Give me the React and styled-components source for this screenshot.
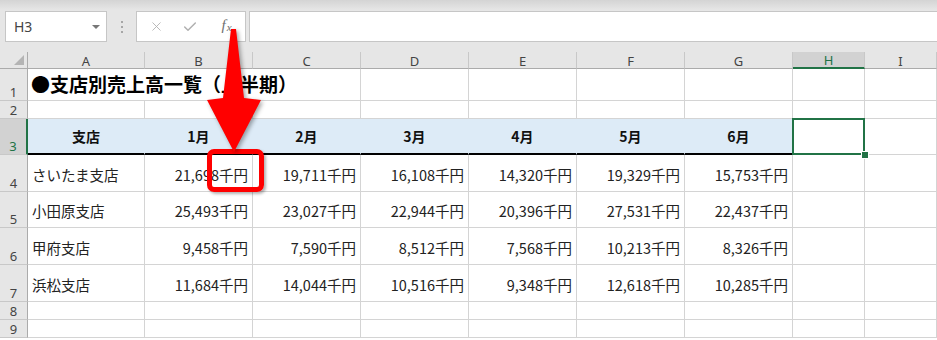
import styled, { createGlobalStyle, css } from "styled-components";
import { X, Check } from "lucide-react";

const GlobalStyle = createGlobalStyle`
    body {
        margin: 0;
        background: #fff;
        font-family: "Noto Sans CJK JP", "Noto Sans", sans-serif;
    }
`;

const GREEN = "#217346";

const Screen = styled.div`
    width: 937px;
    height: 340px;
    overflow: hidden;
    position: relative;
    background: #fff;
`;

const Toolbar = styled.div`
    display: flex;
    align-items: center;
    padding: 11px 0 10px 5px;
    background: linear-gradient(to bottom, #d4d4d4 0px, #e6e6e6 10px, #e6e6e6 100%);
`;

const Box = styled.div`
    height: 31px;
    box-sizing: border-box;
    border: 1px solid #c6c6c6;
    background: #fff;
`;

const NameBox = styled(Box)`
    width: 102px;
    display: flex;
    align-items: center;
    justify-content: space-between;
    padding: 0 6px 0 8px;
    font-family: "Noto Sans", sans-serif;
    font-size: 14px;
    color: #444;
`;

const DropArrow = styled.span`
    width: 0;
    height: 0;
    border-left: 4px solid transparent;
    border-right: 4px solid transparent;
    border-top: 4px solid #777;
`;

const Dots = styled.div`
    display: flex;
    flex-direction: column;
    gap: 3px;
    margin: 0 13px 0 14px;
    span {
        width: 2px;
        height: 2px;
        background: #a6a6a6;
    }
`;

const FxButtons = styled(Box)`
    width: 110px;
    display: grid;
    grid-template-columns: 30px 38px 38px;
    padding-left: 4px;
    align-items: center;
    justify-items: center;
`;

const FxLabel = styled.span`
    display: inline-flex;
    align-items: baseline;
    margin: -3px 3px 0 0;
    font-family: "Liberation Serif", serif;
    font-style: italic;
    font-size: 15px;
    line-height: 1;
    color: #6e6e6e;
    span {
        font-size: 11px;
        margin-left: 1px;
        transform: translateY(1px);
    }
`;

const FormulaInput = styled(Box)`
    flex: 1;
    margin-left: 3px;
    border-right: none;
`;

const Grid = styled.div`
    display: grid;
    grid-template-columns: 28px 117px repeat(6, 108px) 72px 1fr;
    grid-template-rows: 17px 32px 18px 36px 37px 36px 37px 37px 18px 18px;
`;

const ColHead = styled.div`
    box-sizing: border-box;
    background: ${p => (p.$active ? "#d2d2d2" : "#e6e6e6")};
    border-right: 1px solid #c8c8c8;
    border-bottom: ${p => (p.$active ? `2px solid ${GREEN}` : "1px solid #ababab")};
    display: flex;
    align-items: center;
    justify-content: center;
    font-family: "Noto Sans", sans-serif;
    font-size: 13px;
    color: ${p => (p.$active ? GREEN : "#444")};
    padding-top: 1px;
`;

const Corner = styled(ColHead)`
    position: relative;
    border-right: 1px solid #ababab;
    &::after {
        content: "";
        position: absolute;
        right: 3px;
        bottom: 3px;
        width: 0;
        height: 0;
        border-left: 10px solid transparent;
        border-bottom: 10px solid #b4b4b4;
    }
`;

const RowHead = styled.div`
    box-sizing: border-box;
    background: ${p => (p.$active ? "#d2d2d2" : "#e6e6e6")};
    border-right: ${p => (p.$active ? `2px solid ${GREEN}` : "1px solid #ababab")};
    border-bottom: 1px solid #c8c8c8;
    display: flex;
    align-items: flex-end;
    justify-content: center;
    font-family: "Noto Sans", sans-serif;
    font-size: 13px;
    line-height: 15px;
    color: ${p => (p.$active ? GREEN : "#444")};
`;

const Cell = styled.div`
    box-sizing: border-box;
    border-right: 1px solid #d4d4d4;
    border-bottom: 1px solid #d4d4d4;
    display: flex;
    align-items: center;
    justify-content: ${p => (p.$align === "right" ? "flex-end" : p.$align === "center" ? "center" : "flex-start")};
    padding: 2px 4px 0 4px;
    font-size: 14.5px;
    color: #222;
    white-space: nowrap;
    ${p =>
        p.$head &&
        css`
            background: #ddebf7;
            border-right-color: #ddebf7;
            border-bottom: 2px solid #000;
            font-weight: bold;
            font-size: 14px;
            color: #111;
            padding-top: 0;
        `}
`;

const TitleCell = styled(Cell)`
    grid-column: span 3;
    align-items: flex-end;
    padding: 0 4px 3px 3px;
    font-size: 19px;
    font-weight: bold;
    color: #000;
`;

const SelectedCell = styled(Cell)`
    position: relative;
    z-index: 1;
    &::before {
        content: "";
        position: absolute;
        inset: -1px -1px -1px -1px;
        border: 2px solid ${GREEN};
    }
    &::after {
        content: "";
        position: absolute;
        right: -5px;
        bottom: -5px;
        width: 6px;
        height: 6px;
        background: ${GREEN};
        border: 1px solid #fff;
    }
`;

const Arrow = styled.svg`
    position: absolute;
    left: 0;
    top: 0;
    width: 937px;
    height: 340px;
    pointer-events: none;
    filter: drop-shadow(2px 2px 2px rgba(0, 0, 0, 0.35));
    z-index: 3;
`;

const Callout = styled.div`
    position: absolute;
    left: 207px;
    top: 149px;
    width: 57px;
    height: 43px;
    box-sizing: border-box;
    border: 5px solid #ff0000;
    border-radius: 7px;
    box-shadow: 2px 2px 3px rgba(0, 0, 0, 0.3);
    z-index: 2;
`;

const columns = ["A", "B", "C", "D", "E", "F", "G", "H", "I"];
const months = ["1月", "2月", "3月", "4月", "5月", "6月"];

const branches = [
    ["さいたま支店", ["21,698", "19,711", "16,108", "14,320", "19,329", "15,753"]],
    ["小田原支店", ["25,493", "23,027", "22,944", "20,396", "27,531", "22,437"]],
    ["甲府支店", ["9,458", "7,590", "8,512", "7,568", "10,213", "8,326"]],
    ["浜松支店", ["11,684", "14,044", "10,516", "9,348", "12,618", "10,285"]],
];

const emptyRow = n => [
    <RowHead key={`r${n}`}>{n}</RowHead>,
    ...columns.map(c => <Cell key={`${c}${n}`} />),
];

const App = () => {
    return (
        <Screen>
            <GlobalStyle />
            <Toolbar>
                <NameBox>
                    <span>H3</span>
                    <DropArrow />
                </NameBox>
                <Dots>
                    <span />
                    <span />
                    <span />
                </Dots>
                <FxButtons>
                    <X size={15} strokeWidth={1.4} color="#b0b0b0" />
                    <Check size={16} strokeWidth={2.2} color="#b0b0b0" />
                    <FxLabel>
                        f<span>x</span>
                    </FxLabel>
                </FxButtons>
                <FormulaInput />
            </Toolbar>

            <Grid>
                <Corner />
                {columns.map(c => (
                    <ColHead key={c} $active={c === "H"}>
                        {c}
                    </ColHead>
                ))}

                <RowHead>1</RowHead>
                <TitleCell>●支店別売上高一覧（上半期）</TitleCell>
                {columns.slice(3).map(c => <Cell key={`${c}1`} />)}

                {emptyRow(2)}

                <RowHead $active>3</RowHead>
                <Cell $head $align="center">支店</Cell>
                {months.map(m => (
                    <Cell key={m} $head $align="center">
                        {m}
                    </Cell>
                ))}
                <SelectedCell />
                <Cell />

                {branches.map(([name, values], i) => [
                    <RowHead key={`rh${i}`}>{i + 4}</RowHead>,
                    <Cell key={`n${i}`}>{name}</Cell>,
                    ...values.map((v, j) => (
                        <Cell key={`v${i}-${j}`} $align="right">
                            {v}千円
                        </Cell>
                    )),
                    <Cell key={`h${i}`} />,
                    <Cell key={`i${i}`} />,
                ])}

                {emptyRow(8)}
                {emptyRow(9)}
            </Grid>

            <Callout />
            <Arrow viewBox="0 0 937 340">
                <polygon
                    points="231,29 236,29 244,98 261,100 234,152 207,100 223,98"
                    fill="#ff0000"
                />
            </Arrow>
        </Screen>
    );
};

export default App;
